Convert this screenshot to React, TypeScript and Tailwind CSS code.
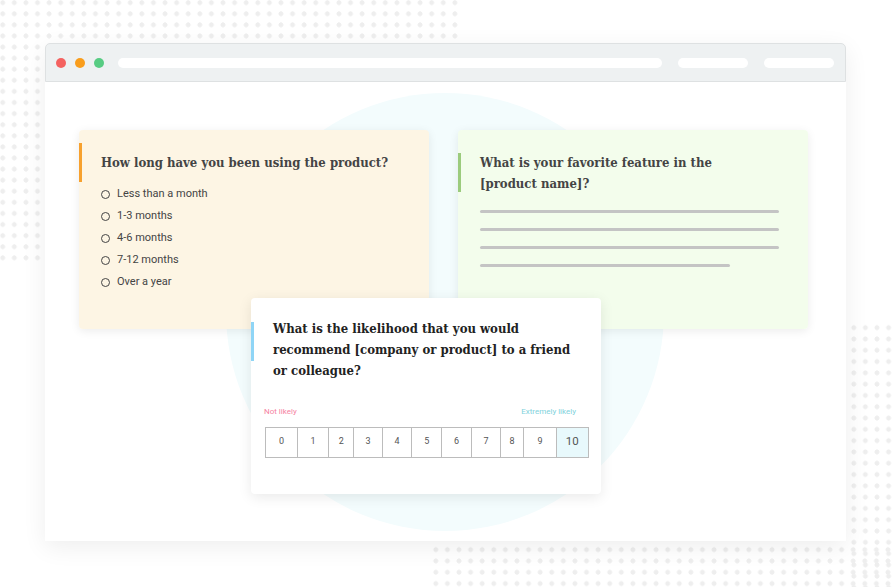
import React from "react";

const slab = "font-['DejaVu_Serif_Condensed','DejaVu_Serif',serif]";

const options = ["Less than a month", "1-3 months", "4-6 months", "7-12 months", "Over a year"];
const cells: [string, number][] = [
  ["0", 32],
  ["1", 31.5],
  ["2", 25],
  ["3", 29],
  ["4", 29.5],
  ["5", 30],
  ["6", 30],
  ["7", 29],
  ["8", 23.5],
  ["9", 32.5],
  ["10", 31.5],
];

export default function App() {
  return (
    <div className="relative w-[892px] h-[587px] overflow-hidden bg-white pt-[43px] pl-[45px] font-['Roboto',sans-serif]">
      {/* decorative dot fields */}
      <div className="absolute left-0 top-0 w-[463px] h-[264px] bg-[radial-gradient(circle,#eeeeee_2.2px,transparent_2.7px)] bg-[length:11.6px_11.1px] bg-[position:-3.1px_-2.9px]" />
      <div className="absolute left-[430px] top-[544px] w-[462px] h-[43px] bg-[radial-gradient(circle,#eeeeee_2.2px,transparent_2.7px)] bg-[length:11.6px_11.3px] bg-[position:0px_0px]" />
      <div className="absolute left-[847.5px] top-[321.6px] w-[45px] h-[266px] bg-[radial-gradient(circle,#eeeeee_2.2px,transparent_2.7px)] bg-[length:11.6px_11.3px] bg-[position:0px_0px]" />

      {/* browser window */}
      <div className="relative z-10 w-[801px] h-[498px] bg-white rounded-t-[5px] shadow-[0_6px_24px_rgba(0,0,0,0.07)] flex flex-col">
        <div className="h-[39px] shrink-0 bg-[#eef1f2] border border-[#dee1e2] rounded-t-[5px] flex items-center pl-[10px] pr-[11px]">
          <div className="w-[10px] h-[10px] rounded-full bg-[#f46260]" />
          <div className="w-[10px] h-[10px] rounded-full bg-[#f99d1c] ml-[9px]" />
          <div className="w-[10px] h-[10px] rounded-full bg-[#57cc83] ml-[9px]" />
          <div className="w-[544px] h-[10px] rounded-full bg-white ml-[14px]" />
          <div className="w-[70px] h-[10px] rounded-full bg-white ml-[16px]" />
          <div className="w-[70px] h-[10px] rounded-full bg-white ml-[16px]" />
        </div>

        <div className="relative flex-1">
          {/* background circle */}
          <div className="absolute left-[181px] top-[11px] w-[438px] h-[438px] rounded-full bg-[#f3fcfd]" />

          <div className="relative flex gap-[29px] pt-[48px] pl-[34px]">
            {/* card 1 */}
            <div className="relative w-[350px] h-[199px] rounded-[4px] bg-[#fdf4e3]/95 shadow-[0_2px_10px_rgba(0,0,0,0.08)] pt-[22px] pl-[22px]">
              <div className="absolute left-0 top-[13px] w-[3px] h-[39px] bg-[#f7a12e]" />
              <h3 className={`${slab} text-[13px] leading-[21px] font-bold text-[#444444]`}>
                How long have you been using the product?
              </h3>
              <ul className="mt-[10.5px]">
                {options.map((o) => (
                  <li key={o} className="flex items-center h-[22px]">
                    <span className="w-[8.5px] h-[8.5px] rounded-full border-[1.5px] border-[#444444]" />
                    <span className="ml-[7.5px] text-[11px] text-[#444444]">{o}</span>
                  </li>
                ))}
              </ul>
            </div>

            {/* card 2 */}
            <div className="relative w-[350px] h-[199px] rounded-[4px] bg-[#f2fdeb]/95 shadow-[0_2px_10px_rgba(0,0,0,0.08)] pt-[22px] pl-[22px]">
              <div className="absolute left-0 top-[23px] w-[3px] h-[39px] bg-[#9bcb7d]" />
              <h3 className={`${slab} text-[13px] leading-[21px] font-bold text-[#444444]`}>
                What is your favorite feature in the
                <br />
                [product name]?
              </h3>
              <div className="mt-[16px] flex flex-col gap-[15px]">
                <div className="w-[299px] h-[3px] rounded-full bg-[#c4c4c4]" />
                <div className="w-[299px] h-[3px] rounded-full bg-[#c4c4c4]" />
                <div className="w-[299px] h-[3px] rounded-full bg-[#c4c4c4]" />
                <div className="w-[250px] h-[3px] rounded-full bg-[#c4c4c4]" />
              </div>
            </div>
          </div>

          {/* card 3, overlapping the first two */}
          <div className="absolute left-[206px] top-[216px] w-[350px] h-[196px] rounded-[4px] bg-white shadow-[0_3px_14px_rgba(0,0,0,0.09)] pt-[19.5px]">
            <div className="absolute left-0 top-[24px] w-[3px] h-[39px] bg-[#8fd5f6]" />
            <h3 className={`${slab} pl-[22px] text-[13px] leading-[21px] font-bold text-[#222222]`}>
              What is the likelihood that you would
              <br />
              recommend [company or product] to a friend
              <br />
              or colleague?
            </h3>
            <div className="mt-[26px] flex justify-between pl-[13px] pr-[25px] text-[8px] leading-[10px]">
              <span className="text-[#f57fa2]">Not likely</span>
              <span className="text-[#7fd2dc]">Extremely likely</span>
            </div>
            <div className="mt-[10px] ml-[14px] w-[324px] h-[31px] flex border border-[#bcbcbc]">
              {cells.map(([n, w], i) => (
                <div
                  key={n}
                  style={{ width: w }}
                  className={`flex items-center justify-center text-[#555555] ${
                    i < cells.length - 1 ? "border-r border-[#bcbcbc]" : ""
                  } ${n === "10" ? "bg-[#e8f9fc] text-[11.5px]" : "text-[9px]"}`}
                >
                  {n}
                </div>
              ))}
            </div>
          </div>
        </div>
      </div>
    </div>
  );
}
